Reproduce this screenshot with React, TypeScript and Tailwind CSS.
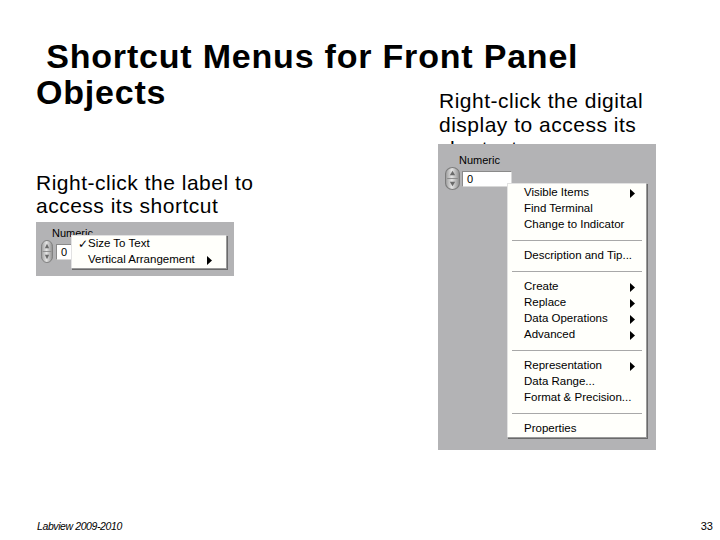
type Item = { label: string; arrow?: boolean } | "sep";

const menuItems: Item[] = [
  { label: "Visible Items", arrow: true },
  { label: "Find Terminal" },
  { label: "Change to Indicator" },
  "sep",
  { label: "Description and Tip..." },
  "sep",
  { label: "Create", arrow: true },
  { label: "Replace", arrow: true },
  { label: "Data Operations", arrow: true },
  { label: "Advanced", arrow: true },
  "sep",
  { label: "Representation", arrow: true },
  { label: "Data Range..." },
  { label: "Format & Precision..." },
  "sep",
  { label: "Properties" },
];

function Arrow() {
  return (
    <svg width="5" height="9" viewBox="0 0 5 9" className="shrink-0">
      <path d="M0 0L5 4.5L0 9Z" fill="#000" />
    </svg>
  );
}

// LabVIEW increment/decrement oval
function Spinner({ w, h }: { w: number; h: number }) {
  return (
    <svg width={w} height={h} viewBox="0 0 14 24" preserveAspectRatio="none" className="shrink-0">
      <defs>
        <linearGradient id="spin" x1="0" y1="0" x2="1" y2="0">
          <stop offset="0" stopColor="#9c9c9c" />
          <stop offset="0.45" stopColor="#e4e4e4" />
          <stop offset="1" stopColor="#8e8e8e" />
        </linearGradient>
      </defs>
      <rect x="0.5" y="0.5" width="13" height="23" rx="6.5" fill="url(#spin)" stroke="#7c7c7c" />
      <line x1="2" y1="12" x2="12" y2="12" stroke="#8a8a8a" />
      <path d="M7 4L9.5 8.5H4.5Z" fill="#6a6a6a" />
      <path d="M7 20L9.5 15.5H4.5Z" fill="#6a6a6a" />
    </svg>
  );
}

function TextBox({ w }: { w: number }) {
  return (
    <div
      className="h-[16px] bg-white border-t border-l border-[#8a8a8a] border-r-[#d8d8d8] border-b-[#d8d8d8] border-r border-b pl-[4px] text-[11px] leading-[14px] text-black"
      style={{ width: w }}
    >
      0
    </div>
  );
}

const menuBox =
  "absolute bg-[#fffffb] border border-t-[#e2e2e2] border-l-[#e2e2e2] border-r-[#9a9a9a] border-b-[#9a9a9a] shadow-[1px_1px_0_#6a6a6a] text-[11.5px] text-black";

export default function App() {
  return (
    <div className="w-[720px] h-[540px] bg-white flex flex-col overflow-hidden font-['Liberation_Sans',Arial,sans-serif] text-black">
      <h1 className="pt-[38px] pl-[36px] text-[34px] leading-[36px] font-bold tracking-[0.8px] whitespace-pre">
        {" Shortcut Menus for Front Panel"}
      </h1>

      <div className="flex">
        {/* left column */}
        <div className="w-[438px] pl-[36px]">
          <div className="text-[34px] leading-[36px] font-bold tracking-[0.8px]">Objects</div>
          <p className="mt-[61px] text-[21px] leading-[23px] tracking-[0.5px]">
            Right-click the label to
            <br />
            access its shortcut
          </p>

          <div className="relative mt-[5px] w-[198px] h-[54px] bg-[#b3b3b5]">
            <div className="pl-[16px] pt-[4px] text-[11px] leading-[14px]">Numeric</div>
            <div className="flex items-center gap-[3px] pl-[5px]">
              <Spinner w={12} h={23} />
              <TextBox w={30} />
            </div>
            <div className={`${menuBox} left-[35px] top-[13px] w-[156px]`}>
              <div className="h-[16px] flex items-center">
                <span className="w-[16px] pl-[6px] font-['DejaVu_Sans',sans-serif] text-[12px] leading-[16px]">✓</span>
                <span>Size To Text</span>
              </div>
              <div className="h-[16px] flex items-center pl-[16px] pr-[14px]">
                <span>Vertical Arrangement</span>
                <span className="ml-auto">
                  <Arrow />
                </span>
              </div>
            </div>
          </div>
        </div>

        {/* right column */}
        <div className="flex-1">
          <div className="mt-[15px] h-[55px] overflow-hidden">
            <p className="pl-[1px] text-[21px] leading-[24px] tracking-[0.5px]">
              Right-click the digital
              <br />
              display to access its
              <br />
              shortcut menu
            </p>
          </div>

          <div className="relative w-[218px] h-[306px] bg-[#b3b3b5]">
            <div className="pl-[21px] pt-[9px] text-[11px] leading-[14px]">Numeric</div>
            <div className="flex items-center gap-[2px] pl-[7px]">
              <Spinner w={15} h={23} />
              <TextBox w={50} />
            </div>
            <div className={`${menuBox} left-[69px] top-[39px] w-[140px] pt-[1px]`}>
              {menuItems.map((it, i) =>
                it === "sep" ? (
                  <div key={i} className="mx-[4px] my-[7px] h-px bg-[#a8a8a8]" />
                ) : (
                  <div key={i} className="h-[16px] flex items-center pl-[16px] pr-[11px]">
                    <span>{it.label}</span>
                    {it.arrow && (
                      <span className="ml-auto">
                        <Arrow />
                      </span>
                    )}
                  </div>
                )
              )}
            </div>
          </div>
        </div>
      </div>

      <footer className="mt-auto flex items-center justify-between pl-[37px] pr-[7px] pb-[7px] text-[11px] leading-[13px]">
        <span className="italic text-[10.5px] tracking-[-0.4px]">Labview 2009-2010</span>
        <span>33</span>
      </footer>
    </div>
  );
}
